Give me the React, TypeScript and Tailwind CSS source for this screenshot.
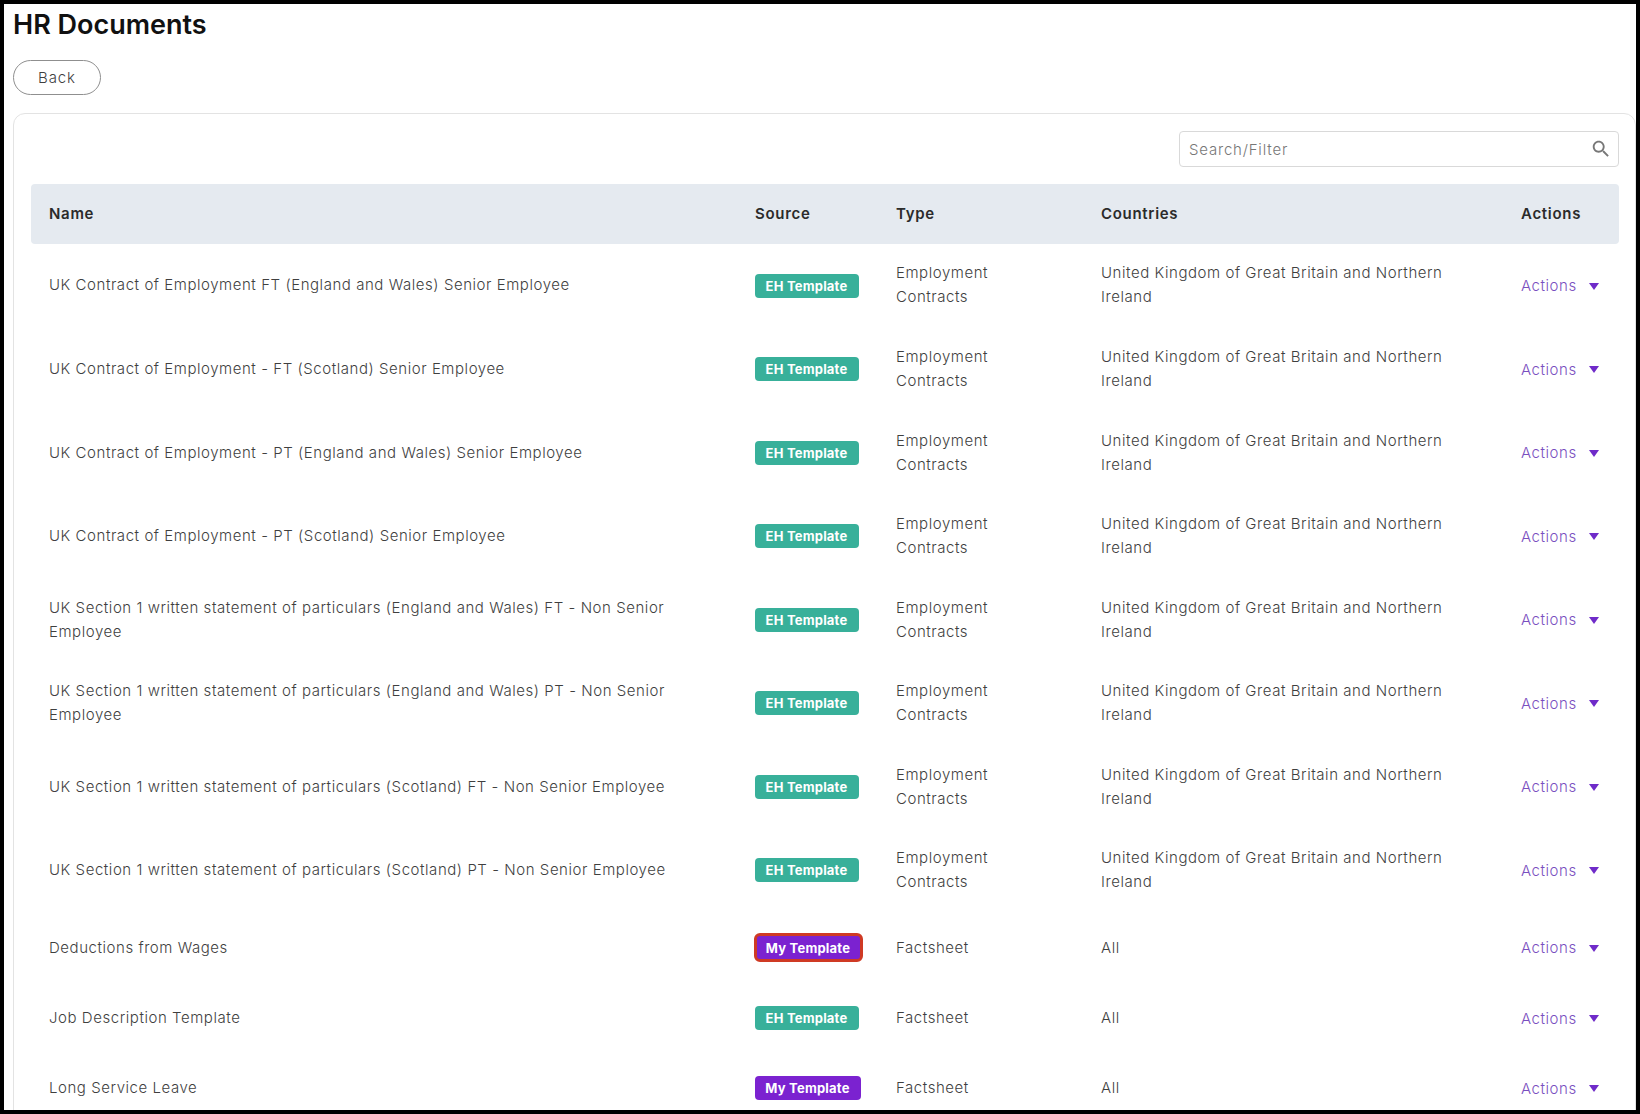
import React from "react";

const UK = "United Kingdom of Great Britain and Northern Ireland";
type Row = { name: string; source: "EH" | "My" | "MyRed"; type: string; countries: string };
const rows: Row[] = [
  { name: "UK Contract of Employment FT (England and Wales) Senior Employee", source: "EH", type: "Employment Contracts", countries: UK },
  { name: "UK Contract of Employment - FT (Scotland) Senior Employee", source: "EH", type: "Employment Contracts", countries: UK },
  { name: "UK Contract of Employment - PT (England and Wales) Senior Employee", source: "EH", type: "Employment Contracts", countries: UK },
  { name: "UK Contract of Employment - PT (Scotland) Senior Employee", source: "EH", type: "Employment Contracts", countries: UK },
  { name: "UK Section 1 written statement of particulars (England and Wales) FT - Non Senior Employee", source: "EH", type: "Employment Contracts", countries: UK },
  { name: "UK Section 1 written statement of particulars (England and Wales) PT - Non Senior Employee", source: "EH", type: "Employment Contracts", countries: UK },
  { name: "UK Section 1 written statement of particulars (Scotland) FT - Non Senior Employee", source: "EH", type: "Employment Contracts", countries: UK },
  { name: "UK Section 1 written statement of particulars (Scotland) PT - Non Senior Employee", source: "EH", type: "Employment Contracts", countries: UK },
  { name: "Deductions from Wages", source: "MyRed", type: "Factsheet", countries: "All" },
  { name: "Job Description Template", source: "EH", type: "Factsheet", countries: "All" },
  { name: "Long Service Leave", source: "My", type: "Factsheet", countries: "All" },
];

const cols = "grid grid-cols-[707px_140px_205px_421px_115px] items-center";

function Badge({ source }: { source: Row["source"] }) {
  if (source === "EH") {
    return <span className="flex h-[24px] w-[104px] items-center justify-center rounded-[4px] bg-[#38b09a] pr-[1px] text-[13px] font-bold tracking-[0.2px] text-white">EH Template</span>;
  }
  if (source === "My") {
    return <span className="flex h-[24px] w-[106px] items-center justify-center rounded-[4px] bg-[#7b22d0] pr-[1px] text-[13px] font-bold tracking-[0.2px] text-white">My Template</span>;
  }
  return <span className="ml-[-1px] flex h-[29px] w-[109px] items-center justify-center rounded-[6px] border-[3px] border-[#cf3a24] bg-[#7b22d0] pr-[1px] text-[13px] font-bold tracking-[0.2px] text-white">My Template</span>;
}

function rowHeight(i: number) {
  if (i === 0) return "h-[83px]";
  if (i === 1) return "h-[84px]";
  if (i < 8) return "h-[83.5px]";
  if (i === 8) return "h-[71px]";
  return "h-[70px]";
}

export default function App() {
  return (
    <div className="h-[1114px] w-[1640px] overflow-hidden border-4 border-black bg-white [font-family:Inter,sans-serif] text-[#3f3f3f]">
      <h1 className="ml-[9px] mt-[4px] text-[27px] font-semibold leading-[34px] text-[#111]">HR Documents</h1>
      <button className="ml-[9px] mt-[18px] flex h-[35px] w-[88px] items-center justify-center rounded-full border border-[#8f8f8f] pt-[1px] text-[15px] font-light tracking-[0.9px]">Back</button>
      <div className="ml-[9px] mt-[18px] rounded-[12px] border border-[#e3e3e3] pl-[17px] pr-[16px] pt-[17px]">
        <div className="flex justify-end">
          <div className="flex h-[36px] w-[440px] items-center justify-between rounded-[4px] border border-[#d9d9d9] pl-[9px] pr-[6px]">
            <span className="pt-[2px] text-[15px] font-light tracking-[0.8px] text-[#777]">Search/Filter</span>
            <svg viewBox="0 0 24 24" className="h-[22px] w-[22px] fill-[#777]">
              <path d="M15.5 14h-.79l-.28-.27C15.41 12.59 16 11.11 16 9.5 16 5.91 13.09 3 9.5 3S3 5.91 3 9.5 5.91 16 9.5 16c1.61 0 3.09-.59 4.23-1.57l.27.28v.79l5 4.99L20.49 19l-4.99-5zm-6 0C7.01 14 5 11.99 5 9.5S7.01 5 9.5 5 14 7.01 14 9.5 11.99 14 9.5 14z" />
            </svg>
          </div>
        </div>
        <div className={`${cols} mt-[17px] h-[60px] rounded-[4px] bg-[#e5eaf0] text-[15px] font-semibold tracking-[0.7px] text-[#2b2b2b]`}>
          <div className="pl-[18px]">Name</div>
          <div className="pl-[17px]">Source</div>
          <div className="pl-[18px]">Type</div>
          <div className="pl-[18px]">Countries</div>
          <div className="pl-[17px]">Actions</div>
        </div>
        {rows.map((r, i) => {
          const shift = i === 0 ? "mb-[2px]" : "";
          return (
            <div key={i} className={`${cols} ${rowHeight(i)} text-[15px] font-light leading-[24px] tracking-[0.55px]`}>
              <div className={`${shift} pl-[18px] pr-[60px]`}>{r.name}</div>
              <div className="pl-[17px]"><Badge source={r.source} /></div>
              <div className={`${shift} pl-[18px] pr-[60px]`}>{r.type}</div>
              <div className={`${shift} pl-[18px] pr-[30px]`}>{r.countries}</div>
              <div className="flex items-center pl-[17px] pt-[1px] text-[#7a4fc0]">
                <span className="w-[68px] shrink-0">Actions</span>
                <svg viewBox="0 0 10 7" className="h-[7px] w-[10px] fill-[#6f2bc9]">
                  <path d="M0 0h10L5 7z" />
                </svg>
              </div>
            </div>
          );
        })}
      </div>
    </div>
  );
}
